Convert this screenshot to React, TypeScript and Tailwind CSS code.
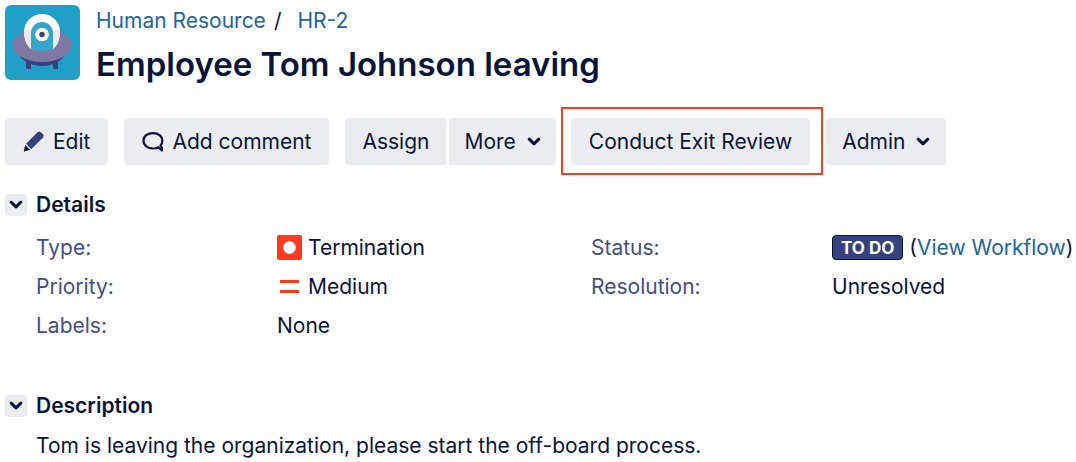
import type { ReactNode } from "react";

function Chevron() {
  return (
    <svg width="14" height="10" viewBox="0 0 14 10" fill="none" aria-hidden="true">
      <path d="M2.2 2.2 7 6.8l4.8-4.6" stroke="currentColor" strokeWidth="3" strokeLinecap="round" strokeLinejoin="round" />
    </svg>
  );
}

function ProjectAvatar() {
  return (
    <svg className="size-[75px] shrink-0" viewBox="0 0 75 75" role="img" aria-label="Human Resource">
      <rect width="75" height="75" rx="6" fill="#219fc8" />
      <path d="M20 52h6v12h-5V56zM54 52h-6v12h5V56z" fill="#36407f" />
      <path d="M12 47c5 9 14 14 25 14s20-5 25-14z" fill="#36407f" />
      <ellipse cx="37" cy="40" rx="29.500" ry="17" fill="#7f78a3" />
      <path d="M19 27a18 18 0 0 1 36 0c0 8-3 14-7 17H26c-4-3-7-9-7-17z" fill="#fff" />
      <path d="M19 25h7v18c-4-3-7-9-7-18zM55 25h-7v18c4-3 7-9 7-18z" fill="#e9eaf0" />
      <path d="M26 28a11 11 0 0 1 22 0v16q-11 4-22 0z" fill="#35a5c9" />
      <circle cx="37" cy="29.500" r="6.800" fill="#fff" />
      <circle cx="37" cy="29.500" r="2.700" fill="#36407f" />
    </svg>
  );
}

function PencilIcon() {
  return (
    <svg width="22" height="22" viewBox="0 0 22 22" aria-hidden="true">
      <path d="M12.200 3.400 15 1q1.600-1 3.100.4l1.800 1.800q1.500 1.600.2 3.200L8.200 18.200 3 12.800z" fill="#36407f" />
      <path d="M2.300 13.900 7 18.800 1.500 20.500Q.7 20.600.8 19.800z" fill="#0a1439" />
    </svg>
  );
}

function CommentIcon() {
  return (
    <svg width="22" height="22" viewBox="0 0 22 22" fill="none" aria-hidden="true">
      <path d="M20.300 9.800c0-4.600-4-7.700-9.300-7.700S1.500 5.200 1.500 9.800s4.200 7.700 9.500 7.700c2 0 3.900-.5 5.400-1.300l3.500 3.300c.4-2-.1-3.600-1.400-5 1.200-1.300 1.800-2.900 1.800-4.700z" stroke="currentColor" strokeWidth="2.200" strokeLinejoin="round" />
    </svg>
  );
}

function ToolButton({ children, className }: { children: ReactNode; className: string }) {
  return (
    <button type="button" className={`flex h-[47px] items-center whitespace-nowrap bg-[#ebecf0] pt-[2px] ${className}`}>
      {children}
    </button>
  );
}

function Section({ title, children }: { title: string; children: ReactNode }) {
  return (
    <section className="pl-[31px]">
      <div className="-ml-[31px] flex h-[34px] items-center gap-[9px]">
        <button type="button" aria-label={`Toggle ${title}`} className="flex size-[22px] items-center justify-center rounded-[4px] bg-[#ebecf0]">
          <Chevron />
        </button>
        <h2 className="font-semibold">{title}</h2>
      </div>
      {children}
    </section>
  );
}

function Field({ label, children }: { label: string; children: ReactNode }) {
  return (
    <div className="flex h-[39px] items-center">
      <dt className="w-[241px] shrink-0 text-[#454d86]">{label}</dt>
      <dd className="flex items-center gap-[6px] whitespace-nowrap">{children}</dd>
    </div>
  );
}

export default function App() {
  return (
    <main className="overflow-x-hidden bg-white pt-[5px] pl-[5px] font-['Inter',sans-serif] text-[21px] leading-8 text-[#0a1439]">
      <header className="flex gap-4">
        <ProjectAvatar />
        <div>
          <nav aria-label="Breadcrumb" className="flex h-8 items-center">
            <a href="#project" className="text-[#23649b]">Human Resource</a>
            <span className="pr-4 pl-2">/</span>
            <a href="#issue" className="text-[#23649b]">HR-2</a>
          </nav>
          <h1 className="h-[50px] whitespace-nowrap text-[33px] leading-[54px] font-semibold">Employee Tom Johnson leaving</h1>
        </div>
      </header>

      <div role="toolbar" aria-label="Issue actions" className="mt-5 flex h-[68px] items-center">
        <ToolButton className="gap-2 rounded-[4px] px-[18px]"><PencilIcon />Edit</ToolButton>
        <ToolButton className="ml-4 gap-2 rounded-[4px] px-[18px]"><CommentIcon />Add comment</ToolButton>
        <ToolButton className="ml-4 rounded-l-[4px] px-[17px]">Assign</ToolButton>
        <ToolButton className="ml-[3px] gap-[11px] rounded-r-[4px] px-[15px]">More<Chevron /></ToolButton>
        <div className="ml-[5px] flex h-[68px] items-center border-2 border-[#ff3b1f] pr-[11px] pl-2">
          <ToolButton className="rounded-[4px] px-[18px]">Conduct Exit Review</ToolButton>
        </div>
        <ToolButton className="ml-[3px] gap-[11px] rounded-[4px] px-4">Admin<Chevron /></ToolButton>
      </div>

      <div className="mt-[13px]">
        <Section title="Details">
          <dl className="mt-[6px] grid grid-cols-[555fr_485fr]">
            <div>
              <Field label="Type:">
                <svg width="25" height="25" viewBox="0 0 25 25" aria-hidden="true">
                  <rect width="25" height="25" rx="2" fill="#ff3b1f" />
                  <circle cx="12.500" cy="12.500" r="6.300" fill="#fff" />
                </svg>
                Termination
              </Field>
              <Field label="Priority:">
                <svg width="25" height="25" viewBox="0 0 25 25" aria-hidden="true">
                  <path d="M3 6h19v3H3zM3 16h19v3H3z" fill="#ff3b1f" />
                </svg>
                Medium
              </Field>
              <Field label="Labels:">None</Field>
            </div>
            <div>
              <Field label="Status:">
                <span className="flex h-[25px] items-center rounded-[4px] border border-[#0a1439] bg-[#36407f] px-2 text-[17px] font-bold text-white">TO DO</span>
                <span>(<a href="#workflow" className="text-[#23649b]">View Workflow</a>)</span>
              </Field>
              <Field label="Resolution:">Unresolved</Field>
            </div>
          </dl>
        </Section>
      </div>

      <div className="mt-11 pb-[1px]">
        <Section title="Description">
          <p className="mt-[7px]">Tom is leaving the organization, please start the off-board process.</p>
        </Section>
      </div>
    </main>
  );
}
